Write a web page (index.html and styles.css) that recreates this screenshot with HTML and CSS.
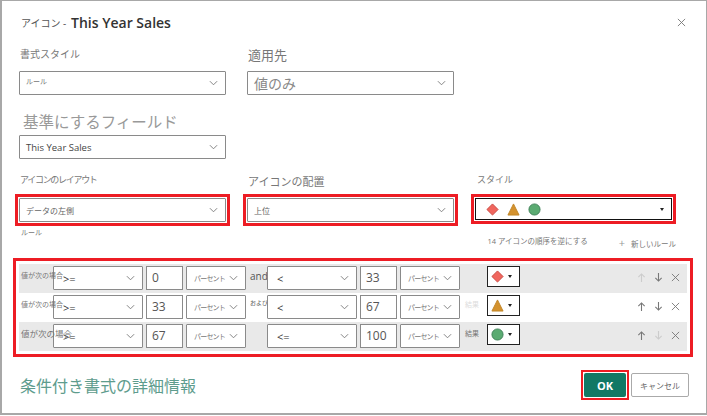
FILE: index.html
```html
<!DOCTYPE html>
<html lang="ja">
<head>
  <meta charset="UTF-8">
  <title>アイコン - This Year Sales</title>
  <link rel="stylesheet" href="styles.css">
</head>
<body>
  <svg class="defs" width="0" height="0">
    <symbol id="chev" viewBox="0 0 10 6"><path d="M1 1l4 4 4-4" fill="none" stroke="#777" stroke-width="1"/></symbol>
    <symbol id="cross" viewBox="0 0 10 10"><path d="M1 1l8 8M9 1l-8 8" fill="none" stroke="currentColor" stroke-width="1"/></symbol>
    <symbol id="up" viewBox="0 0 10 10"><path d="M5 10V1M1.5 4.5L5 1l3.5 3.5" fill="none" stroke="currentColor" stroke-width="1.2"/></symbol>
    <symbol id="down" viewBox="0 0 10 10"><path d="M5 0v9M1.5 5.500L5 9l3.500-3.500" fill="none" stroke="currentColor" stroke-width="1.2"/></symbol>
    <symbol id="diamond" viewBox="0 0 14 14"><path d="M7 1l6 6-6 6-6-6z" fill="#f0665e" stroke="#c8453f" stroke-width="1"/></symbol>
    <symbol id="triangle" viewBox="0 0 14 14"><path d="M7 1l6 12H1z" fill="#d4922e" stroke="#c08426" stroke-width="1"/></symbol>
    <symbol id="circle" viewBox="0 0 14 14"><circle cx="7" cy="7" r="6" fill="#5bab72" stroke="#3f8058" stroke-width="1"/></symbol>
  </svg>

  <div class="dialog">
    <!-- Title -->
    <div class="title-row">
      <span class="title-prefix">アイコン -</span>
      <span class="title-name">This Year Sales</span>
      <svg class="close-icon"><use href="#cross"/></svg>
    </div>

    <!-- Format style / Apply to -->
    <div class="top-fields">
      <div class="field">
        <div class="label style-label">書式スタイル</div>
        <div class="select select-wide"><span class="tiny up-text">ルール</span><svg class="chev"><use href="#chev"/></svg></div>
      </div>
      <div class="field field-apply">
        <div class="label apply-label">適用先</div>
        <div class="select select-wide"><span class="big-value">値のみ</span><svg class="chev"><use href="#chev"/></svg></div>
      </div>
    </div>

    <!-- Based on field -->
    <div class="base-label">基準にするフィールド</div>
    <div class="select select-wide"><span class="plain-value">This Year Sales</span><svg class="chev"><use href="#chev"/></svg></div>

    <!-- Icon options -->
    <div class="option-fields">
      <div class="option">
        <div class="label option-label">アイコンのレイアウト</div>
        <div class="highlight"><div class="select select-wide"><span class="small-value">データの左側</span><svg class="chev"><use href="#chev"/></svg></div></div>
      </div>
      <div class="option">
        <div class="label option-label-big">アイコンの配置</div>
        <div class="highlight"><div class="select select-wide"><span class="small-value">上位</span><svg class="chev"><use href="#chev"/></svg></div></div>
      </div>
      <div class="option option-style">
        <div class="label style-name">スタイル</div>
        <div class="highlight">
          <div class="style-picker">
            <svg class="shape"><use href="#diamond"/></svg>
            <svg class="shape"><use href="#triangle"/></svg>
            <svg class="shape"><use href="#circle"/></svg>
            <span class="caret"></span>
          </div>
        </div>
      </div>
    </div>

    <div class="rule-bar">
      <span class="tiny rule-title">ルール</span>
      <span class="bar-text reverse">14 アイコンの順序を逆にする</span>
      <span class="bar-text new-rule"><span class="plus">+</span>新しいルール</span>
    </div>

    <!-- Rules -->
    <div class="rules">
      <div class="rule shaded">
        <span class="rule-if tiny">値が次の場合</span>
        <div class="select op"><span class="op-text">&gt;=</span><svg class="chev"><use href="#chev"/></svg></div>
        <div class="num">0</div>
        <div class="select unit"><span class="unit-text">パーセント</span><svg class="chev"><use href="#chev"/></svg></div>
        <span class="join">and</span>
        <div class="select op"><span class="op-text">&lt;</span><svg class="chev"><use href="#chev"/></svg></div>
        <div class="num">33</div>
        <div class="select unit"><span class="unit-text">パーセント</span><svg class="chev"><use href="#chev"/></svg></div>
        <span class="result"></span>
        <div class="icon-pick"><svg class="shape"><use href="#diamond"/></svg><span class="caret"></span></div>
        <div class="actions">
          <svg class="faint"><use href="#up"/></svg>
          <svg><use href="#down"/></svg>
          <svg><use href="#cross"/></svg>
        </div>
      </div>
      <div class="rule">
        <span class="rule-if tiny">値が次の場合</span>
        <div class="select op"><span class="op-text">&gt;=</span><svg class="chev"><use href="#chev"/></svg></div>
        <div class="num">33</div>
        <div class="select unit"><span class="unit-text">パーセント</span><svg class="chev"><use href="#chev"/></svg></div>
        <span class="join join-small">および</span>
        <div class="select op"><span class="op-text">&lt;</span><svg class="chev"><use href="#chev"/></svg></div>
        <div class="num">67</div>
        <div class="select unit"><span class="unit-text">パーセント</span><svg class="chev"><use href="#chev"/></svg></div>
        <span class="result tiny result-faint">結果</span>
        <div class="icon-pick"><svg class="shape"><use href="#triangle"/></svg><span class="caret"></span></div>
        <div class="actions">
          <svg><use href="#up"/></svg>
          <svg><use href="#down"/></svg>
          <svg><use href="#cross"/></svg>
        </div>
      </div>
      <div class="rule shaded">
        <span class="rule-if rule-if-big">値が次の場合</span>
        <div class="select op"><span class="op-text">&gt;=</span><svg class="chev"><use href="#chev"/></svg></div>
        <div class="num">67</div>
        <div class="select unit"><span class="unit-text">パーセント</span><svg class="chev"><use href="#chev"/></svg></div>
        <span class="join"></span>
        <div class="select op"><span class="op-text">&lt;=</span><svg class="chev"><use href="#chev"/></svg></div>
        <div class="num">100</div>
        <div class="select unit"><span class="unit-text">パーセント</span><svg class="chev"><use href="#chev"/></svg></div>
        <span class="result tiny">結果</span>
        <div class="icon-pick"><svg class="shape"><use href="#circle"/></svg><span class="caret"></span></div>
        <div class="actions">
          <svg><use href="#up"/></svg>
          <svg class="faint"><use href="#down"/></svg>
          <svg><use href="#cross"/></svg>
        </div>
      </div>
    </div>

    <!-- Footer -->
    <div class="footer">
      <span class="more-link">条件付き書式の詳細情報</span>
      <div class="buttons">
        <div class="ok-frame"><button class="btn-ok">OK</button></div>
        <button class="btn-cancel">キャンセル</button>
      </div>
    </div>
  </div>
</body>
</html>
```

FILE: styles.css
```css
/* Reset */
body, html {
  margin: 0;
  padding: 0;
  background: #fff;
  font-family: "Open Sans", "Noto Sans CJK JP", sans-serif;
  overflow: hidden;
}

.defs {
  display: block;
  height: 0;
}

/* Dialog */
.dialog {
  box-sizing: border-box;
  width: 707px;
  height: 415px;
  padding: 0 17px 0 17px;
  border: 1px solid #a8a8a8;
  border-left-width: 2px;
  border-bottom-width: 2px;
  color: #666;
}

.title-row {
  display: flex;
  align-items: center;
  height: 44px;
  padding-left: 2px;
  padding-bottom: 2px;
  box-sizing: border-box;
}

.title-prefix {
  width: 50px;
  font-size: 10px;
  color: #555;
}

.title-name {
  font-size: 14px;
  font-weight: 600;
  color: #333;
}

.close-icon {
  width: 9px;
  height: 9px;
  margin-left: auto;
  margin-right: 3px;
  color: #777;
}

/* Fields */
.top-fields {
  display: flex;
  gap: 21px;
}

.label {
  display: flex;
  align-items: center;
  box-sizing: border-box;
  color: #777;
}

.style-label {
  height: 26px;
  padding-left: 1px;
  padding-bottom: 10px;
  font-size: 10px;
}

.apply-label {
  height: 26px;
  padding-left: 1px;
  padding-bottom: 8px;
  font-size: 13px;
}

.select {
  box-sizing: border-box;
  display: flex;
  align-items: center;
  height: 24px;
  background: #fff;
  border: 1px solid #8a8a8a;
  border-radius: 1px;
  padding: 0 7px 0 6px;
}

.select-wide {
  width: 207px;
}

.chev {
  width: 9px;
  height: 6px;
  margin-left: auto;
  flex-shrink: 0;
}

.tiny {
  font-size: 7px;
  color: #777;
}

.bar-text {
  font-size: 7.500px;
  color: #777;
}

.up-text {
  margin-bottom: 5px;
}

.big-value {
  font-size: 14px;
  color: #888;
}

.plain-value {
  font-size: 9.500px;
  color: #444;
}

.small-value {
  font-size: 8px;
  color: #666;
}

.base-label {
  height: 40px;
  padding: 14px 0 0 4px;
  box-sizing: border-box;
  font-size: 15.500px;
  line-height: 26px;
  color: #999;
}

/* Icon options */
.option-fields {
  display: flex;
  margin-top: 10px;
  margin-left: -4px;
}

.option {
  width: 228px;
}

.option-style {
  width: 205px;
}

.option-label {
  height: 25px;
  padding: 0 0 4px 5px;
  font-size: 9px;
  letter-spacing: -1.300px;
}

.option-label-big {
  height: 25px;
  padding: 0 0 2px 5px;
  font-size: 11px;
}

.style-name {
  height: 25px;
  padding: 0 0 5px 6px;
  font-size: 9px;
}

.highlight {
  box-sizing: border-box;
  width: 215px;
  padding: 1px;
  border: 3px solid #ed1c24;
}

.option-style .highlight {
  width: 205px;
}

.style-picker {
  box-sizing: border-box;
  display: flex;
  align-items: center;
  gap: 8px;
  height: 22px;
  padding: 0 7px 0 10px;
  border: 1px solid #111;
}

.shape {
  width: 13px;
  height: 13px;
  flex-shrink: 0;
}

.caret {
  width: 0;
  height: 0;
  margin-left: auto;
  border: 2px solid transparent;
  border-top: 3px solid #222;
  border-bottom: 0;
}

.rule-bar {
  display: flex;
  align-items: flex-start;
  height: 32px;
  padding-left: 2px;
}

.rule-title {
  margin-top: 1px;
}

.reverse {
  margin-left: auto;
  margin-top: 9px;
}

.new-rule {
  margin-top: 9px;
  margin-left: 31px;
  margin-right: 13px;
}

.plus {
  margin-right: 6px;
  font-size: 11px;
  color: #999;
}

/* Rules */
.rules {
  box-sizing: border-box;
  width: 680px;
  margin-left: -6px;
  padding: 3px;
  border: 3px solid #ed1c24;
}

.rule {
  display: flex;
  align-items: flex-start;
  height: 29px;
  padding-top: 2px;
  box-sizing: border-box;
}

.shaded {
  background: #e9e9e9;
}

.rule-if {
  position: relative;
  z-index: 1;
  width: 60px;
  margin-top: 3px;
  margin-right: -28px;
  margin-left: 2px;
  line-height: 14px;
  white-space: nowrap;
}

.rule-if-big {
  font-size: 8.500px;
  color: #777;
}

.op {
  width: 90px;
  padding-left: 9px;
}

.op-text {
  font-size: 11px;
  color: #333;
}

.num {
  box-sizing: border-box;
  width: 37px;
  height: 24px;
  margin-left: 3px;
  padding-left: 5px;
  background: #fff;
  border: 1px solid #8a8a8a;
  font-size: 12px;
  line-height: 22px;
  color: #555;
}

.unit {
  width: 60px;
  margin-left: 3px;
  padding-left: 7px;
}

.unit-text {
  font-size: 7px;
  letter-spacing: -0.800px;
  white-space: nowrap;
  color: #777;
}

.join {
  width: 21px;
  font-size: 10px;
  padding-left: 4px;
  box-sizing: border-box;
  line-height: 20px;
  color: #555;
}

.join-small {
  font-size: 6px;
  line-height: 16px;
  white-space: nowrap;
}

.result {
  width: 27px;
  line-height: 20px;
  padding-left: 5px;
  box-sizing: border-box;
}

.result-faint {
  color: #ddd;
}

.icon-pick {
  box-sizing: border-box;
  display: flex;
  align-items: center;
  width: 33px;
  height: 21px;
  padding: 0 7px 0 3px;
  background: #fff;
  border: 1px solid #222;
}

.actions {
  display: flex;
  align-items: center;
  gap: 8px;
  height: 22px;
  margin-left: auto;
  margin-right: 7px;
  color: #777;
}

.actions svg {
  width: 9px;
  height: 9px;
}

.actions .faint {
  color: #ccc;
}

/* Footer */
.footer {
  display: flex;
  align-items: center;
  justify-content: space-between;
  margin-top: 13px;
  padding-left: 1px;
}

.more-link {
  font-size: 16px;
  color: #5e9c8d;
}

.buttons {
  display: flex;
  align-items: center;
  gap: 2px;
}

.ok-frame {
  box-sizing: border-box;
  width: 48px;
  padding: 1px;
  border: 2px solid #ed1c24;
}

.btn-ok {
  display: block;
  width: 42px;
  height: 24px;
  padding: 0;
  background: #117865;
  color: #fff;
  border: none;
  border-radius: 2px;
  font-family: inherit;
  font-size: 11px;
  font-weight: 700;
}

.btn-cancel {
  width: 58px;
  height: 24px;
  padding: 0;
  background: #fff;
  color: #666;
  border: 1px solid #aaa;
  border-radius: 2px;
  font-family: inherit;
  font-size: 8px;
}
```
